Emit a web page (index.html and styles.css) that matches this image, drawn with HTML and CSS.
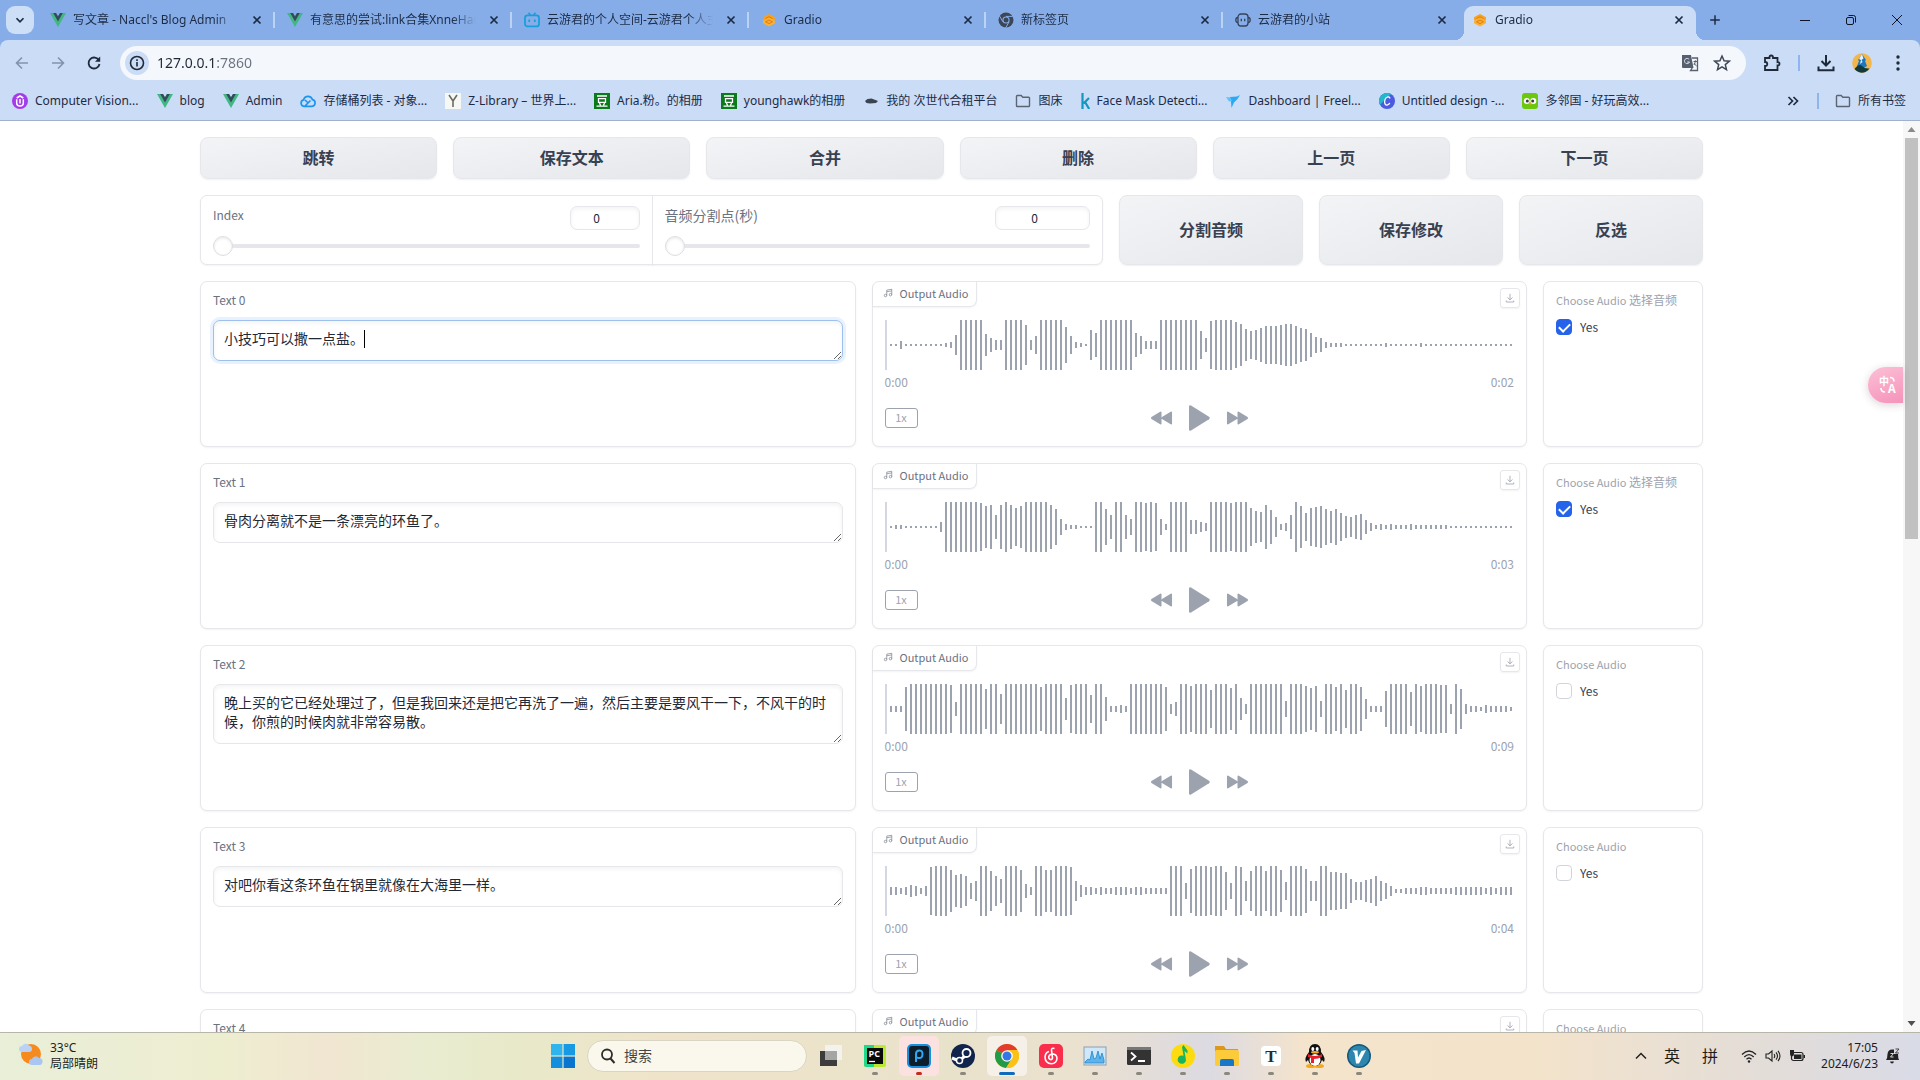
FILE: index.html
```html
<!DOCTYPE html>
<html lang="zh-CN">
<head>
<meta charset="utf-8">
<title>Gradio</title>
<link rel="stylesheet" href="styles.css">
</head>
<body>
<svg class="defs" aria-hidden="true">
  <symbol id="i-close" viewBox="0 0 16 16"><path d="M4.500 4.500l7 7M11.500 4.500l-7 7" fill="none" stroke="currentColor" stroke-width="1.700"/></symbol>
  <symbol id="i-vue" viewBox="0 0 16 16"><path d="M0 1h6l2 3 2-3h6L8 15z" fill="#41b883"/><path d="M3.200 1H6l2 3.400L10 1h2.800L8 9.500z" fill="#35495e"/></symbol>
  <symbol id="i-gradio" viewBox="0 0 16 16"><path d="M8 2l6 3.200v2.600L8 11 2 7.800V5.200z" fill="#f9a11b"/><path d="M8 5.600l6 3.200v2.400L8 14.400l-6-3.200V8.800z" fill="#fbb034"/><path d="M4.500 6.500L8 4.700l3.500 1.800M4.500 9.800L8 11.600l3.500-1.800L8 8z" fill="none" stroke="#e07f12"/></symbol>
  <symbol id="i-folder" viewBox="0 0 16 16"><path d="M1.500 3.300q0-.8.800-.8h3.900l1.600 1.700h5.900q.8 0 .8.800v7.700q0 .8-.8.800H2.300q-.8 0-.8-.8z" fill="none" stroke="#5b6472" stroke-width="1.400"/></symbol>
  <symbol id="i-dou" viewBox="0 0 16 16"><rect width="16" height="16" fill="#0b7a1a"/><path d="M3 3h10M4.500 5.700h7v3.600h-7zM5.500 10l1 2.500M10.500 10l-1 2.500M2.500 13.200h11" fill="none" stroke="#fff" stroke-width="1.300"/></symbol>
  <symbol id="i-music" viewBox="0 0 24 24"><path d="M9 18V5l12-2v13M9 9l12-2" fill="none" stroke="currentColor" stroke-width="1.500"/><circle cx="6" cy="18" r="3" fill="none" stroke="currentColor" stroke-width="1.500"/><circle cx="18" cy="16" r="3" fill="none" stroke="currentColor" stroke-width="1.500"/></symbol>
  <symbol id="i-save" viewBox="0 0 12 12"><path d="M6 1v7M3 5.300L6 8.200l3-2.900M1.500 9v1.800h9V9" fill="none" stroke="currentColor"/></symbol>
  <symbol id="i-rew" viewBox="0 0 24 16"><path d="M12 2v12q-.3 1.200-1.400.5L1.500 9q-1.200-1 0-2l9.100-5.500Q11.700.8 12 2zM23 2v12q-.3 1.200-1.400.5L12.500 9q-1.200-1 0-2l9.100-5.500q1.100-.7 1.400.5z" fill="currentColor"/></symbol>
  <symbol id="i-play" viewBox="0 0 21 26"><path d="M0 1.500Q.2-.4 2 .6l18 11.200q1.500 1.200 0 2.400L2 25.400q-1.800 1-2-.9z" fill="currentColor"/></symbol>
  <symbol id="i-ffw" viewBox="0 0 24 16"><path d="M1 2v12q.3 1.200 1.400.5L11.500 9q1.200-1 0-2L2.400 1.500Q1.300.8 1 2zM12 2v12q.3 1.200 1.400.5L22.500 9q1.200-1 0-2l-9.100-5.500Q12.300.8 12 2z" fill="currentColor"/></symbol>
</svg>

<header class="browser">
  <div class="tabstrip">
    <button class="tab-search" aria-label="搜索标签页"><svg viewBox="0 0 16 16" width="14" height="14"><path d="M4 6l4 4 4-4" fill="none" stroke="#1c2b45" stroke-width="2"/></svg></button>
    <div class="tabs">
      <div class="tab"><svg class="fav"><use href="#i-vue"/></svg><span class="tab-title">写文章 - Naccl's Blog Admin</span><button class="tab-close" aria-label="关闭"><svg><use href="#i-close"/></svg></button></div>
      <div class="tab"><svg class="fav"><use href="#i-vue"/></svg><span class="tab-title">有意思的尝试:link合集XnneHang的博客</span><button class="tab-close" aria-label="关闭"><svg><use href="#i-close"/></svg></button></div>
      <div class="tab"><svg class="fav" viewBox="0 0 16 16"><path d="M4.500.8L6.500 3M11.500.8L9.500 3" stroke="#169fdb" stroke-width="1.600"/><rect x="1" y="3.400" width="14" height="11" rx="2.500" fill="none" stroke="#169fdb" stroke-width="1.800"/><path d="M5.200 7.500v2.500M10.800 7.500v2.500" stroke="#169fdb" stroke-width="1.700"/></svg><span class="tab-title">云游君的个人空间-云游君个人主页-哔哩哔哩</span><button class="tab-close" aria-label="关闭"><svg><use href="#i-close"/></svg></button></div>
      <div class="tab"><svg class="fav"><use href="#i-gradio"/></svg><span class="tab-title">Gradio</span><button class="tab-close" aria-label="关闭"><svg><use href="#i-close"/></svg></button></div>
      <div class="tab"><svg class="fav" viewBox="0 0 16 16"><circle cx="8" cy="8" r="7.500" fill="#3c4656"/><circle cx="8" cy="8" r="3.600" fill="#87ade8"/><circle cx="8" cy="8" r="2.500" fill="#3c4656"/><path d="M8 4.400h6.800M4.900 9.800L1.500 4M11.100 9.800l-3.400 6" stroke="#87ade8"/></svg><span class="tab-title">新标签页</span><button class="tab-close" aria-label="关闭"><svg><use href="#i-close"/></svg></button></div>
      <div class="tab"><svg class="fav" viewBox="0 0 16 16"><rect x="3" y="2" width="10" height="12" rx="3" fill="none" stroke="#34435c" stroke-width="1.300"/><path d="M3 5.500Q.8 5.500.8 8T3 10.500M13 5.500q2.200 0 2.200 2.500T13 10.500M6.300 6.800v2.400M9.700 6.800v2.400" fill="none" stroke="#34435c" stroke-width="1.300"/></svg><span class="tab-title">云游君的小站</span><button class="tab-close" aria-label="关闭"><svg><use href="#i-close"/></svg></button></div>
      <div class="tab active"><svg class="fav"><use href="#i-gradio"/></svg><span class="tab-title">Gradio</span><button class="tab-close" aria-label="关闭"><svg><use href="#i-close"/></svg></button></div>
    </div>
    <button class="new-tab" aria-label="新标签页"><svg viewBox="0 0 16 16"><path d="M8 2.500v11M2.500 8h11" stroke="currentColor" stroke-width="1.700"/></svg></button>
    <div class="window-controls">
      <button aria-label="最小化"><svg viewBox="0 0 12 12"><path d="M1 6.500h10" stroke="currentColor"/></svg></button>
      <button aria-label="还原"><svg viewBox="0 0 12 12"><rect x="1.500" y="3.500" width="7" height="7" rx="1.500" fill="none" stroke="currentColor"/><path d="M3.500 1.500h5q2 0 2 2v5" fill="none" stroke="currentColor"/></svg></button>
      <button aria-label="关闭窗口"><svg viewBox="0 0 12 12"><path d="M1 1l10 10M11 1L1 11" stroke="currentColor"/></svg></button>
    </div>
  </div>

  <div class="toolbar">
    <button class="tool dim" aria-label="后退"><svg viewBox="0 0 16 16"><path d="M14 8H3M8 2.500L2.500 8 8 13.500" fill="none" stroke="currentColor" stroke-width="1.600"/></svg></button>
    <button class="tool dim" aria-label="前进"><svg viewBox="0 0 16 16"><path d="M2 8h11M8 2.500L13.500 8 8 13.500" fill="none" stroke="currentColor" stroke-width="1.600"/></svg></button>
    <button class="tool" aria-label="重新加载"><svg viewBox="0 0 16 16"><path d="M13 5.500A5.500 5.500 0 1 0 13.500 9" fill="none" stroke="currentColor" stroke-width="1.800"/><path d="M14.200 1.500v5.200H9z" fill="currentColor"/></svg></button>
    <div class="omnibox">
      <button class="site-info" aria-label="查看网站信息"><svg viewBox="0 0 16 16"><circle cx="8" cy="8" r="6.500" fill="none" stroke="currentColor" stroke-width="1.600"/><path d="M8 7v4.500M8 4.300v1.600" stroke="currentColor" stroke-width="1.600"/></svg></button>
      <input class="url" type="text" aria-label="地址栏" value="127.0.0.1:7860">
      <button class="omni-tool" aria-label="翻译此页"><svg viewBox="0 0 18 18"><path d="M1 1h9l2.500 13H2q-1 0-1-1z" fill="#56606e"/><path d="M11 4h5.500v12.500H9.500l2-3" fill="none" stroke="#56606e" stroke-width="1.300"/><path d="M8.200 5.500A2.600 2.600 0 1 0 8.500 8H6.200" fill="none" stroke="#dfe6ef"/><path d="M12.500 7.500h3.500M14.300 6.300v1.200q-.4 2.500-1.500 3.500M13 9q1 2 2.700 3" fill="none" stroke="#56606e"/></svg></button>
      <button class="omni-tool" aria-label="为此标签页添加书签"><svg viewBox="0 0 18 18"><path d="M9 2l2.100 4.700 5.100.5-3.900 3.400 1.200 5L9 12.900l-4.500 2.700 1.200-5L1.800 7.200l5.100-.5z" fill="none" stroke="#3e4856" stroke-width="1.500"/></svg></button>
    </div>
    <div class="toolbar-right">
      <button class="tool" aria-label="扩展程序"><svg viewBox="0 0 18 18"><path d="M2 4h4.500q-.3-2.500 1.700-2.500T10 4h4.500v4.200q2-.2 2 1.600t-2 1.700V16H2v-4q2.300.2 2.300-1.900T2 8z" fill="none" stroke="currentColor" stroke-width="1.800"/></svg></button>
      <i class="divider"></i>
      <button class="tool" aria-label="下载"><svg viewBox="0 0 18 18"><path d="M9 1v10M4.500 7L9 11.500 13.500 7M1.500 12.500v3.700h15v-3.700" fill="none" stroke="currentColor" stroke-width="2"/></svg></button>
      <button class="tool" aria-label="个人资料"><svg class="avatar" viewBox="0 0 20 20"><circle cx="10" cy="10" r="9.800" fill="#f2b64c"/><path d="M10 1l4 6-1 1 2 5-5 3-5-3 2-5-1-1z" fill="#1d78c1"/><path d="M10 1l1.500 4.500-2 1.500 1 2-2.500 2 1-4-2-1z" fill="#e8f4fa"/><path d="M2.500 16Q7 10 10 13t7.500 2.500Q14 19.800 10 19.800T2.500 16z" fill="#123a3c"/></svg></button>
      <button class="tool" aria-label="菜单"><svg viewBox="0 0 18 18"><circle cx="9" cy="3" r="1.700" fill="currentColor"/><circle cx="9" cy="9" r="1.700" fill="currentColor"/><circle cx="9" cy="15" r="1.700" fill="currentColor"/></svg></button>
    </div>
  </div>

  <nav class="bookmarks" aria-label="书签栏">
    <a href="#"><svg viewBox="0 0 16 16"><circle cx="8" cy="8" r="8" fill="#a43bea"/><path d="M4.700 6.300v4q0 2.700 3.300 2.700t3.300-2.700v-4M8 6v4.500M4.700 5L8 3l3.300 2" fill="none" stroke="#fff" stroke-width="1.500"/></svg>Computer Vision...</a>
    <a href="#"><svg><use href="#i-vue"/></svg>blog</a>
    <a href="#"><svg><use href="#i-vue"/></svg>Admin</a>
    <a href="#"><svg viewBox="0 0 16 16"><path d="M4 13.300a3.300 3.300 0 0 1-.3-6.500 4.500 4.500 0 0 1 8.700-.2 3.400 3.400 0 0 1-.4 6.700zM5 13l5.500-5.500M8.200 10L5 7" fill="none" stroke="#1b96f0" stroke-width="1.700"/></svg>存储桶列表 - 对象...</a>
    <a href="#"><svg viewBox="0 0 16 16"><rect width="16" height="16" fill="#f7f7f4"/><path d="M4 2l4 6 4-6M8 8v6" fill="none" stroke="#6c6c66" stroke-width="1.600"/></svg>Z-Library – 世界上...</a>
    <a href="#"><svg><use href="#i-dou"/></svg>Aria.粉。的相册</a>
    <a href="#"><svg><use href="#i-dou"/></svg>younghawk的相册</a>
    <a href="#"><svg viewBox="0 0 16 16"><path d="M2 8l2.500-2 4-.5 4 1.500L15 8l-2 2-6 .5L3.500 10z" fill="#3b4451"/></svg>我的 次世代合租平台</a>
    <a href="#"><svg><use href="#i-folder"/></svg>图床</a>
    <a href="#"><svg class="narrow" viewBox="0 0 9 16"><path d="M1.500 0v16M8 5l-5.500 5.500M4 9l4.200 7" fill="none" stroke="#1397c0" stroke-width="2.200"/></svg>Face Mask Detecti...</a>
    <a href="#"><svg viewBox="0 0 16 16"><path d="M5 4l7-.5L15 2l-2.500 4L9 9.500 6.500 15l-.5-6z" fill="#29aaf4"/><path d="M1 4l4 .5L7 8 4 8.500z" fill="#5cc2fa"/></svg>Dashboard | Freel...</a>
    <a href="#"><svg viewBox="0 0 16 16"><circle cx="8" cy="8" r="8" fill="#4a5be0"/><path d="M1.200 4A8 8 0 0 1 12 1Q6 6 1 12A8 8 0 0 1 1.200 4z" fill="#1fb9ca"/><path d="M11 5.500Q10.500 3.500 8.600 4 5.800 5 5.600 9q.3 3.500 2.700 3 1.700-.5 2.500-2" fill="none" stroke="#fff" stroke-width="1.300"/></svg>Untitled design -...</a>
    <a href="#"><svg viewBox="0 0 16 16"><rect width="16" height="16" rx="3" fill="#6cc80f"/><circle cx="4.700" cy="8" r="3" fill="#fff"/><circle cx="11.300" cy="8" r="3" fill="#fff"/><circle cx="5.300" cy="8" r="1.500" fill="#3d3d46"/><circle cx="10.700" cy="8" r="1.500" fill="#3d3d46"/><path d="M8 9l1.300 1.500L8 12l-1.300-1.500z" fill="#f9a01b"/></svg>多邻国 - 好玩高效...</a>
    <div class="bookmarks-end">
      <button aria-label="更多书签"><svg viewBox="0 0 16 16"><path d="M3.500 4l4 4-4 4M8.500 4l4 4-4 4" fill="none" stroke="#1f2b3d" stroke-width="1.700"/></svg></button>
      <i class="divider"></i>
      <a href="#"><svg><use href="#i-folder"/></svg>所有书签</a>
    </div>
  </nav>
</header>

<div class="viewport">
  <main class="page">
    <div class="container">
      <div class="actions">
        <button class="btn">跳转</button>
        <button class="btn">保存文本</button>
        <button class="btn">合并</button>
        <button class="btn">删除</button>
        <button class="btn">上一页</button>
        <button class="btn">下一页</button>
      </div>

      <div class="controls">
        <div class="card sliders">
          <div class="slider-box">
            <div class="slider-head"><label for="index">Index</label><input class="num" type="text" aria-label="Index" value="0"></div>
            <input id="index" class="range" type="range" min="0" max="100" value="0">
          </div>
          <div class="slider-box">
            <div class="slider-head"><label class="cjk-label" for="split">音频分割点(秒)</label><input class="num wide" type="text" aria-label="音频分割点(秒)" value="0"></div>
            <input id="split" class="range" type="range" min="0" max="100" value="0">
          </div>
        </div>
        <button class="btn">分割音频</button>
        <button class="btn">保存修改</button>
        <button class="btn">反选</button>
      </div>

      <section class="item">
        <div class="card text-card"><label for="t0">Text 0</label>
          <div class="field"><textarea id="t0" class="focused" rows="1">小技巧可以撒一点盐。</textarea><i class="caret"></i></div></div>
        <div class="card audio">
          <div class="audio-head"><span class="audio-label"><svg><use href="#i-music"/></svg>Output Audio</span><button class="save" aria-label="下载"><svg><use href="#i-save"/></svg></button></div>
          <svg class="wave" data-levels="2*2 8 2*8 4 6 20 50*5 22 14 10 10 50*4 40 10 18 50*5 36 18 6 4 2 30 24 50*7 24 18 8*3 50*8 28 14 48 50*4 46 42 32 28 30 34 38*3 40 42 42 38 34 32 24 16 14 6 4*3 2*8 4 2*6 4 2*18"></svg>
          <div class="times"><span>0:00</span><span>0:02</span></div>
          <div class="player"><button class="speed">1x</button><div class="transport"><button aria-label="后退"><svg class="skip"><use href="#i-rew"/></svg></button><button aria-label="播放"><svg class="play"><use href="#i-play"/></svg></button><button aria-label="快进"><svg class="skip"><use href="#i-ffw"/></svg></button></div></div>
        </div>
        <div class="card choose"><span class="choose-title">Choose Audio <span class="cjk">选择音频</span></span><label class="check"><input type="checkbox" checked>Yes</label></div>
      </section>

      <section class="item">
        <div class="card text-card"><label for="t1">Text 1</label>
          <div class="field"><textarea id="t1" rows="1">骨肉分离就不是一条漂亮的环鱼了。</textarea></div></div>
        <div class="card audio">
          <div class="audio-head"><span class="audio-label"><svg><use href="#i-music"/></svg>Output Audio</span><button class="save" aria-label="下载"><svg><use href="#i-save"/></svg></button></div>
          <svg class="wave" data-levels="2 4 4 2*7 10 50*7 48 42 44 24 44 50 44 38 42 50*5 44 36 16 6 4 4 2*3 50*2 36 24 50*2 24 16 50*2 48 50 48 16 6 50*4 14 14 10 8 50*4 48 50*3 38 32 30 44 34 20 6 8 24 50 42 28 38 40 42 36 32 36 28 22 20 24 26 14 8 4 6 4 6 4*3 6 4*7 2*13"></svg>
          <div class="times"><span>0:00</span><span>0:03</span></div>
          <div class="player"><button class="speed">1x</button><div class="transport"><button aria-label="后退"><svg class="skip"><use href="#i-rew"/></svg></button><button aria-label="播放"><svg class="play"><use href="#i-play"/></svg></button><button aria-label="快进"><svg class="skip"><use href="#i-ffw"/></svg></button></div></div>
        </div>
        <div class="card choose"><span class="choose-title">Choose Audio <span class="cjk">选择音频</span></span><label class="check"><input type="checkbox" checked>Yes</label></div>
      </section>

      <section class="item">
        <div class="card text-card"><label for="t2">Text 2</label>
          <div class="field"><textarea id="t2" rows="2">晚上买的它已经处理过了，但是我回来还是把它再洗了一遍，然后主要是要风干一下，不风干的时候，你煎的时候肉就非常容易散。</textarea></div></div>
        <div class="card audio">
          <div class="audio-head"><span class="audio-label"><svg><use href="#i-music"/></svg>Output Audio</span><button class="save" aria-label="下载"><svg><use href="#i-save"/></svg></button></div>
          <svg class="wave" data-levels="6*3 44 50*8 48 14 50*5 40 50*2 30 50*7 44 50*4 22 48 50*3 28 50*2 24 6 6 8 6 50*7 44 10 14 50*2 46 50*3 38 50*3 42 50 22 10 50*7 16 50*3 46 42 46 16 50*2 44 50 38 50*2 44 20 6*3 36 50*4 34 50 46 50*3 48 48 10 50 40 10 6 6 4 8 6*4 4"></svg>
          <div class="times"><span>0:00</span><span>0:09</span></div>
          <div class="player"><button class="speed">1x</button><div class="transport"><button aria-label="后退"><svg class="skip"><use href="#i-rew"/></svg></button><button aria-label="播放"><svg class="play"><use href="#i-play"/></svg></button><button aria-label="快进"><svg class="skip"><use href="#i-ffw"/></svg></button></div></div>
        </div>
        <div class="card choose"><span class="choose-title">Choose Audio</span><label class="check"><input type="checkbox">Yes</label></div>
      </section>

      <section class="item">
        <div class="card text-card"><label for="t3">Text 3</label>
          <div class="field"><textarea id="t3" rows="1">对吧你看这条环鱼在锅里就像在大海里一样。</textarea></div></div>
        <div class="card audio">
          <div class="audio-head"><span class="audio-label"><svg><use href="#i-music"/></svg>Output Audio</span><button class="save" aria-label="下载"><svg><use href="#i-save"/></svg></button></div>
          <svg class="wave" data-levels="8 8 6 8 12 10 6 10 48 50*3 42 32 34 30 16 20 50*2 40 30 24 50*3 42 14 8 50*2 42 42 50*3 48 20 12 8 8 6 8 6 6 8*3 6 8 8 6*5 50*3 16 44 50*3 48 50*2 38 16 50 48 20 40 50*2 40 50*2 42 18 50*3 44 20 20 50*2 38 38 36 36 24 18 18 22 24 30 20 16 10 4 4 6*3 8 8 6*5 8*6 6 8 6 8*3"></svg>
          <div class="times"><span>0:00</span><span>0:04</span></div>
          <div class="player"><button class="speed">1x</button><div class="transport"><button aria-label="后退"><svg class="skip"><use href="#i-rew"/></svg></button><button aria-label="播放"><svg class="play"><use href="#i-play"/></svg></button><button aria-label="快进"><svg class="skip"><use href="#i-ffw"/></svg></button></div></div>
        </div>
        <div class="card choose"><span class="choose-title">Choose Audio</span><label class="check"><input type="checkbox">Yes</label></div>
      </section>

      <section class="item">
        <div class="card text-card"><span class="label">Text 4</span></div>
        <div class="card audio">
          <div class="audio-head"><span class="audio-label"><svg><use href="#i-music"/></svg>Output Audio</span><button class="save" aria-label="下载"><svg><use href="#i-save"/></svg></button></div>
        </div>
        <div class="card choose"><span class="choose-title">Choose Audio</span></div>
      </section>
    </div>
  </main>
  <div class="scrollbar" aria-hidden="true">
    <svg viewBox="0 0 17 17"><path d="M4.500 11L8.500 6l4 5z" fill="#8b8b8b"/></svg>
    <i class="thumb"></i>
    <svg class="down" viewBox="0 0 17 17"><path d="M4.500 6l4 5 4-5z" fill="#505050"/></svg>
  </div>
  <button class="translate" aria-label="翻译"><span class="zh">中</span><span class="en">A</span><svg viewBox="0 0 20 20"><path d="M12 2.500q4 0 4 4M3 13q0 4 4 4" fill="none" stroke="#fff" stroke-width="1.600"/></svg></button>
</div>

<footer class="taskbar">
  <div class="weather">
    <svg viewBox="0 0 24 24"><circle cx="12" cy="12" r="10" fill="#f58b1f"/><path d="M3 10a3 3 0 0 1 0-6 4 4 0 0 1 7-.5Q13 4 13 7t-3 3z" fill="#b9d2f6"/><path d="M13 23a3 3 0 0 1 0-6 4 4 0 0 1 7-1q4 .5 3.500 4T20 23z" fill="#a9c5f2"/></svg>
    <div><div>33°C</div><div>局部晴朗</div></div>
  </div>
  <div class="apps">
    <button class="app" aria-label="开始"><svg viewBox="0 0 24 24"><path d="M0 0h11.400v11.400H0z" fill="#2fb4ee"/><path d="M12.600 0H24v11.400H12.600z" fill="#1899e4"/><path d="M0 12.600h11.400V24H0z" fill="#138fde"/><path d="M12.600 12.600H24V24H12.600z" fill="#0a75cf"/></svg></button>
    <label class="search"><svg viewBox="0 0 16 16"><circle cx="7" cy="6.500" r="5" fill="none" stroke="#2c2c2a" stroke-width="1.800"/><path d="M10.500 10.500l4 4.500" stroke="#2c2c2a" stroke-width="2"/></svg><input type="text" placeholder="搜索" aria-label="搜索"></label>
    <button class="app" aria-label="任务视图"><svg viewBox="0 0 24 24"><rect x="1" y="7" width="17" height="15" fill="#3c3c3c"/><rect x="6" y="1" width="17" height="15" fill="#f4f4f4" opacity=".85"/><rect x="6" y="7" width="12" height="9" fill="#a5a5a3"/></svg></button>
    <button class="app running" aria-label="PyCharm"><svg viewBox="0 0 24 24"><rect x="1" y="1" width="22" height="22" rx="2" fill="#b9ea2f"/><path d="M1 1h10v22H3q-2 0-2-2z" fill="#21d789"/><rect x="4" y="4" width="16" height="16" fill="#0a0a0a"/><path d="M6 17.500h6" stroke="#fff" stroke-width="1.300"/><text x="5.500" y="13" font-size="9" font-weight="700" fill="#fff">PC</text></svg></button>
    <button class="app running alert" aria-label="P"><svg viewBox="0 0 24 24"><rect width="24" height="24" rx="5" fill="#1690dd"/><rect x="2" y="2" width="20" height="20" rx="3" fill="#0c1d2c"/><path d="M9 18v-8q0-3.500 3.300-3.500t3.200 3.800-3.300 3.700q-1.500 0-3-1" fill="none" stroke="#2ba9f5" stroke-width="2"/></svg></button>
    <button class="app running" aria-label="Steam"><svg viewBox="0 0 24 24"><circle cx="12" cy="12" r="12" fill="#10244c"/><path d="M1 14l7 3 6-5" stroke="#fff" stroke-width="3" fill="none"/><circle cx="15.500" cy="9" r="4" fill="#10244c" stroke="#fff" stroke-width="1.800"/><circle cx="8.500" cy="16.500" r="3" fill="#10244c" stroke="#fff" stroke-width="1.500"/></svg></button>
    <button class="app current" aria-label="Chrome"><svg viewBox="0 0 24 24"><circle cx="12" cy="12" r="12" fill="#fbc116"/><path d="M12 12L1.600 6A12 12 0 0 1 22.400 6z" fill="#e33b2e"/><path d="M12 12L1.600 6A12 12 0 0 0 11 24l6-9z" fill="#229a46"/><path d="M12 6h10.400A12 12 0 0 1 11 24l5.500-9z" fill="#fbc116"/><circle cx="12" cy="12" r="5.800" fill="#fff"/><circle cx="12" cy="12" r="4.500" fill="#3577e5"/></svg></button>
    <button class="app running" aria-label="网易云音乐"><svg viewBox="0 0 24 24"><rect width="24" height="24" rx="5" fill="#fb2d4c"/><path d="M15.500 4.500q-3-1-3 1.500l1 8q-.5 2-2.200 1.500-2-.7-1.500-3 .8-2.500 4.200-2.500 4 .5 4 4.500-.5 5-5.500 5.300-6.500-.3-6.500-7Q6.500 8.500 10 7.500" fill="none" stroke="#fff" stroke-width="1.600"/></svg></button>
    <button class="app running" aria-label="性能监视器"><svg viewBox="0 0 24 24"><rect x="1" y="3" width="22" height="18" fill="#cfe8f9" stroke="#8b9fb0"/><path d="M2 18l3-3 2 1 2-9 2 8 2-1 2-7 2 8 2-6 2 7v3H2z" fill="#5db4ec" stroke="#2387c8" stroke-width=".8"/></svg></button>
    <button class="app running" aria-label="终端"><svg viewBox="0 0 24 24"><rect y="3" width="24" height="18" rx="1.500" fill="#333"/><path d="M0 3h24v3H0z" fill="#777"/><path d="M4 8.500l4.500 4L4 16.500M11 17h7" fill="none" stroke="#fff" stroke-width="1.800"/></svg></button>
    <button class="app running" aria-label="QQ音乐"><svg viewBox="0 0 24 24"><circle cx="12" cy="12" r="12" fill="#fcdc10"/><path d="M11 3l1.500-2 4 5.500v3L13.500 7 15 16a4.200 4.200 0 1 1-2.500-4.200z" fill="#1bb45d"/></svg></button>
    <button class="app running" aria-label="文件资源管理器"><svg viewBox="0 0 24 24"><path d="M0 2h9l2 3h12v5H0z" fill="#dd981b"/><rect y="6" width="24" height="16" rx="1.500" fill="#fccb3c"/><path d="M5 22v-5q0-2 2-2h10q2 0 2 2v5z" fill="#1878c8"/></svg></button>
    <button class="app running" aria-label="Typora"><svg viewBox="0 0 24 24"><rect x="2" y="2" width="20" height="20" rx="4" fill="#fff"/><text class="serif" x="12" y="18" font-size="17" font-weight="700" text-anchor="middle" fill="#2b2b2b">T</text></svg></button>
    <button class="app running" aria-label="QQ"><svg viewBox="0 0 24 24"><ellipse cx="8" cy="22" rx="5" ry="2" fill="#f5a81c"/><ellipse cx="16" cy="22" rx="5" ry="2" fill="#f5a81c"/><path d="M12 0q6 0 6 8 5 6 3 10l-2-2q-2 6-7 6t-7-6l-2 2q-2-4 3-10 0-8 6-8z" fill="#111"/><ellipse cx="12" cy="16" rx="5.500" ry="6" fill="#fff"/><ellipse cx="9.800" cy="5" rx="1.500" ry="2" fill="#fff"/><ellipse cx="14.200" cy="5" rx="1.500" ry="2" fill="#fff"/><ellipse cx="12" cy="8.300" rx="4" ry="1.300" fill="#f5a81c"/><path d="M5 10q7 4 14 0v3q-4 2-8 2v4H8v-5l-3-1z" fill="#e7202c"/></svg></button>
    <button class="app running" aria-label="V"><svg viewBox="0 0 24 24"><circle cx="12" cy="12" r="12" fill="#17577c"/><circle cx="12" cy="12" r="10.500" fill="#2d86ae"/><path d="M5.500 6.500h5l.5 7 3.500-6.500 4.500-1-7 13.500H9L7.500 9z" fill="#fff"/></svg></button>
  </div>
  <div class="tray">
    <button aria-label="显示隐藏的图标"><svg viewBox="0 0 16 16"><path d="M3 10.500l5-5 5 5" fill="none" stroke="#222" stroke-width="1.500"/></svg></button>
    <button class="ime">英</button>
    <button class="ime">拼</button>
    <div class="status">
      <svg viewBox="0 0 16 16"><path d="M1 6.500q7-7 14 0M3.300 9q4.700-4.800 9.400 0M5.500 11.300q2.500-2.600 5 0" fill="none" stroke="#222" stroke-width="1.300"/><circle cx="8" cy="13.500" r="1.200" fill="#222"/></svg>
      <svg viewBox="0 0 16 16"><path d="M1 6h2.500L7 3v10L3.500 10H1zM9 6q1.500 2 0 4M11 4.300q3 3.700 0 7.400M13 2.800q4 5.200 0 10.400" fill="none" stroke="#222" stroke-width="1.100"/></svg>
      <svg viewBox="0 0 16 16"><rect x="2.500" y="4.500" width="11.500" height="8" rx="2" fill="none" stroke="#222" stroke-width="1.200"/><rect x="5" y="6.500" width="7.500" height="4.500" fill="#222"/><path d="M15.300 7v3" stroke="#222" stroke-width="1.400"/><path d="M1 2h4v4q0 2-2 2.500Q1 8 1 6z" fill="#222"/></svg>
    </div>
    <div class="clock"><div>17:05</div><div>2024/6/23</div></div>
    <svg class="bell" viewBox="0 0 16 16"><path d="M2 12q1.500-2 1.500-6Q4 1.500 8 1.500h2V6h4q0 4 1 6z" fill="#222"/><path d="M6 13.500h4q-.5 2-2 2t-2-2z" fill="#222"/><path d="M11.500 1h3.500l-3.500 4H15" fill="none" stroke="#333" stroke-width=".9"/><path d="M6.500 5.500h3l-3 3.500h3" fill="none" stroke="#eee" stroke-width=".9"/></svg>
  </div>
</footer>
<script src="waves.js"></script>
</body>
</html>
```
FILE: styles.css
```css
* { box-sizing: border-box; }
html, body { margin: 0; height: 100%; }
body {
  display: flex;
  flex-direction: column;
  overflow: hidden;
  background: #fff;
  font: 12px/16px "Noto Sans", "Noto Sans CJK SC", sans-serif;
  color: #1f2937;
}
button { margin: 0; padding: 0; border: 0; background: none; font: inherit; color: inherit; display: flex; align-items: center; justify-content: center; }
input, textarea { margin: 0; font: inherit; color: inherit; }
a { color: inherit; text-decoration: none; }
svg { flex: none; display: block; }
i { flex: none; display: block; }
.defs { position: absolute; width: 0; height: 0; }

/* browser frame */
.browser { flex: none; background: #87ade8; color: #1c2b45; border-bottom: 1px solid #a3b0cb; }
.tabstrip { display: flex; height: 40px; padding: 6px 0 0 6px; }
.tab-search { width: 28px; height: 28px; border-radius: 9px; background: #cddff7; }
.tabs { display: flex; min-width: 0; gap: 5px; margin-left: 8px; }
.tab { position: relative; display: flex; align-items: center; flex: 0 1 232px; min-width: 0; width: 232px; height: 34px; padding: 0 9px 6px 8px; gap: 7px; }
.tab::after { content: ""; position: absolute; right: -1px; top: 6px; width: 2px; height: 16px; background: #bcd2f3; }
.tab:nth-child(6)::after { display: none; }
.tab.active { background: #cbdcf6; border-radius: 9px 9px 0 0; }
.tab.active::before, .tab.active::after { content: ""; position: absolute; top: auto; bottom: 0; width: 9px; height: 9px; background: radial-gradient(circle at 0 0, transparent 9px, #cbdcf6 9px); }
.tab.active::before { left: -9px; }
.tab.active::after { right: -9px; background: radial-gradient(circle at 100% 0, transparent 9px, #cbdcf6 9px); }
.fav { width: 16px; height: 16px; }
.tab-title { flex: 1; min-width: 0; margin-right: 3px; overflow: hidden; white-space: nowrap; mask-image: linear-gradient(90deg, #000 calc(100% - 24px), transparent); }
.tab-close, .tab-close svg { width: 16px; height: 16px; }
.new-tab { width: 28px; height: 28px; margin-left: 5px; }
.new-tab svg { width: 14px; height: 14px; }
.window-controls { display: flex; margin-left: auto; height: 28px; color: #0d1526; }
.window-controls button { width: 46px; }
.window-controls svg { width: 12px; height: 12px; }

.toolbar { display: flex; align-items: center; height: 46px; padding: 0 4px; background: #cbdcf6; border-radius: 8px 8px 0 0; color: #1f2937; }
.tool { width: 36px; height: 34px; }
.tool svg { width: 16px; height: 16px; }
.tool.dim { color: #8392ad; }
.omnibox { flex: 1; display: flex; align-items: center; height: 34px; margin-left: 8px; padding: 0 8px 0 5px; border-radius: 17px; background: #f4f8fd; }
.site-info { width: 24px; height: 24px; border-radius: 12px; background: #cbdcf6; }
.site-info svg { width: 16px; height: 16px; }
.url { flex: 1; min-width: 0; border: 0; outline: 0; padding: 0 8px; font-size: 14px; line-height: 20px; color: transparent; background: linear-gradient(90deg, #1f2937 67px, #6a7280 67px) text; }
.omni-tool { width: 32px; height: 32px; }
.omni-tool svg { width: 18px; height: 18px; }
.toolbar-right { display: flex; align-items: center; margin-left: 8px; }
.toolbar-right .tool svg { width: 18px; height: 18px; }
.toolbar-right .tool .avatar { width: 20px; height: 20px; }
.divider { width: 2px; height: 16px; margin: 0 8px; background: #8fb4ee; }

.bookmarks { display: flex; align-items: center; height: 34px; padding: 0 14px 4px 12px; gap: 18px; background: #cbdcf6; white-space: nowrap; }
.bookmarks a { display: flex; align-items: center; gap: 7px; }
.bookmarks svg { width: 16px; height: 16px; }
.bookmarks svg.narrow { width: 9px; }
.bookmarks-end { display: flex; align-items: center; margin-left: auto; }
.bookmarks-end .divider { margin: 0 16px; }

/* page */
.viewport { position: relative; flex: 1; min-height: 0; display: flex; overflow: hidden; font-family: "Noto Sans CJK SC", sans-serif; }
.page { flex: 1; min-width: 0; padding: 16px; }
.container { max-width: 1503px; margin: 0 auto; display: flex; flex-direction: column; gap: 16px; }
.actions { display: grid; grid-template-columns: repeat(6, minmax(0, 1fr)); gap: 16px; }
.btn { min-height: 42px; padding-bottom: 2px; border: 1px solid #e5e7eb; border-radius: 8px; background: linear-gradient(to bottom right, #f3f4f6, #e5e7eb); box-shadow: 0 1px 2px rgba(0, 0, 0, .06); font-size: 16px; line-height: 24px; font-weight: 600; color: #374151; }
.controls { display: grid; grid-template-columns: minmax(0, 1fr) repeat(3, 184px); gap: 16px; }
.card { border: 1px solid #e5e7eb; border-radius: 7px; background: #fff; box-shadow: 0 1px 2px rgba(0, 0, 0, .05); }
.sliders { display: grid; grid-template-columns: 1fr 1fr; height: 70px; }
.slider-box { display: flex; flex-direction: column; padding: 10px 12px; gap: 6px; }
.slider-box + .slider-box { border-left: 1px solid #e5e7eb; }
.slider-head { display: flex; justify-content: space-between; color: #6b7280; }
.slider-head label { line-height: 18px; }
.cjk-label { font-size: 14px; }
.num { width: 70px; height: 24px; padding: 0 16px 1px 0; border: 1px solid #e5e7eb; border-radius: 7px; background: #fff; box-shadow: inset 0 2px 4px rgba(0, 0, 0, .05); text-align: center; color: #1f2937; }
.num.wide { width: 95px; }
.range { appearance: none; width: 100%; height: 20px; background: none; }
.range::-webkit-slider-runnable-track { height: 4px; border-radius: 2px; background: #e5e7eb; }
.range::-webkit-slider-thumb { appearance: none; width: 20px; height: 20px; margin-top: -8px; border: 1px solid #dcdee2; border-radius: 10px; background: #fff; box-shadow: inset 0 1px 3px rgba(0, 0, 0, .1); }

.item { display: grid; grid-template-columns: minmax(0, 1fr) minmax(0, 1fr) 160px; gap: 16px; min-height: 166px; }
.text-card { padding: 10px 12px; color: #6b7280; display: flex; flex-direction: column; gap: 12px; }
.text-card label, .text-card .label { line-height: 16px; }
.field { position: relative; display: flex; }
textarea { flex: 1; padding: 8px 10px 12px; border: 1px solid #e5e7eb; border-radius: 7px; outline: 0; background: #fff; box-shadow: inset 0 2px 4px rgba(0, 0, 0, .05); font-size: 14px; line-height: 19px; color: #1f2937; overflow: hidden; resize: vertical; }
textarea.focused { border-color: #9fc0ec; box-shadow: 0 0 0 3px #e8f2fe, inset 0 2px 4px rgba(0, 0, 0, .05); }
.caret { position: absolute; left: 151px; top: 10px; width: 1px; height: 18px; background: #000; }

.audio { display: flex; flex-direction: column; color: #9ca3af; }
.audio-head { display: flex; justify-content: space-between; align-items: flex-start; height: 38px; }
.audio-label { display: flex; align-items: center; gap: 7px; height: 25px; padding: 0 8px 3px 10px; border: solid #e5e7eb; border-width: 0 1px 1px 0; border-radius: 0 0 7px 0; box-shadow: 0 1px 2px rgba(0, 0, 0, .05); font-size: 11px; color: #6b7280; }
.audio-label svg { width: 10px; height: 10px; }
.save { width: 20px; height: 20px; margin: 6px; border: 1px solid #e5e7eb; border-radius: 3px; box-shadow: 0 1px 2px rgba(0, 0, 0, .05); }
.save svg { width: 10px; height: 10px; }
.wave { width: calc(100% - 24px); height: 50px; margin: 0 12px; }
.wave .cursor { fill: #d4d6e2; }
.wave .bar { fill: #9ca3af; }
.times { display: flex; justify-content: space-between; margin-top: 4px; padding: 0 12px; }
.player { display: grid; grid-template-columns: 1fr auto 1fr; align-items: center; margin: 15px 12px; }
.speed { width: 33px; height: 20px; padding-bottom: 2px; border: 1px solid #9ca3af; border-radius: 3px; font-size: 11px; line-height: 16px; }
.transport { display: flex; align-items: center; gap: 16px; height: 26px; }
.skip { width: 23px; height: 16px; }
.play { width: 21px; height: 26px; }

.choose { display: flex; flex-direction: column; padding: 10px 12px; gap: 11px; color: #9ca3af; font-size: 11px; }
.cjk { font-size: 12px; }
.choose-title { line-height: 16px; white-space: nowrap; }
.check { display: flex; align-items: center; gap: 8px; font-size: 12px; color: #374151; }
.check input { appearance: none; display: grid; place-items: center; width: 16px; height: 16px; border: 1px solid #d1d5db; border-radius: 4px; background: #fff; }
.check input:checked { border-color: #2563eb; background: #2563eb; }
.check input:checked::after { content: ""; width: 5px; height: 9px; border: solid #fff; border-width: 0 2px 2px 0; transform: translateY(-1px) rotate(45deg); }

.scrollbar { flex: none; display: flex; flex-direction: column; width: 17px; background: #f7f7f7; }
.scrollbar svg { width: 17px; height: 17px; }
.thumb { height: 44%; margin: 0 2px; background: #c1c1c1; }
.scrollbar .down { margin-top: auto; }
.translate { position: absolute; right: 17px; top: 246px; width: 35px; height: 36px; border-radius: 18px 0 0 18px; background: linear-gradient(160deg, #fcc0d6, #f593ba); box-shadow: 0 2px 8px rgba(80, 30, 60, .2); color: #fff; font-weight: 700; }
.translate svg { width: 20px; height: 20px; margin-left: 4px; }
.translate .zh, .translate .en { position: absolute; font-size: 10px; line-height: 12px; }
.translate .zh { left: 11px; top: 8px; }
.translate .en { left: 20px; top: 15px; font-size: 12px; }

/* taskbar */
.taskbar { flex: none; display: grid; grid-template-columns: 1fr auto 1fr; align-items: center; height: 48px; padding-bottom: 2px; border-top: 1px solid #b8b6a8; color: #1d1d1b; background: linear-gradient(90deg, #e9efd8, #eeedd0 12%, #f1e6d1 17%, #e9ecd0 22%, #e8e9c9 27%, #efe4ca 34%, #e9e2cb 50%, #ebe1cf 56%, #dcdae2 63%, #f5e4cc 68%, #f3e3cb 80%, #e3ddd8 92%, #d9dbe7); }
.weather { display: flex; align-items: center; gap: 7px; padding-left: 19px; }
.weather svg { width: 24px; height: 24px; margin-bottom: 4px; }
.apps { display: flex; align-items: center; gap: 4px; padding-left: 2px; }
.app { position: relative; width: 40px; height: 40px; border-radius: 5px; }
.app svg { width: 24px; height: 24px; font-family: "Open Sans", sans-serif; }
.app .serif { font-family: "Liberation Serif", serif; }
.app.running::after, .app.current::after { content: ""; position: absolute; bottom: 1px; width: 6px; height: 3px; border-radius: 2px; background: #8c877c; }
.app.alert { background: #fbe2e0; }
.app.alert::after { background: #c42b1c; }
.app.current { background: #f6f1e8; }
.app.current::after { width: 16px; background: #0f6cbd; }
.search { display: flex; align-items: center; gap: 8px; width: 220px; height: 32px; padding: 0 12px; border: 1px solid #d9d5c2; border-radius: 16px; background: #faf8ed; }
.search svg { width: 16px; height: 16px; }
.search input { flex: 1; min-width: 0; padding: 0; border: 0; outline: 0; background: none; font-size: 14px; line-height: 20px; }
.search input::placeholder { color: #45443e; opacity: 1; }
.tray { display: flex; align-items: center; justify-content: flex-end; padding-right: 20px; }
.tray button { width: 24px; height: 40px; }
.tray svg { width: 16px; height: 16px; }
.tray .ime { width: 38px; font-size: 16px; }
.status { display: flex; gap: 8px; margin: 0 16px 0 12px; }
.clock { text-align: right; }
.tray .bell { margin-left: 6px; }
```
FILE: waves.js
```js
// Draws each waveform from its run-length list of bar heights ("50*4" = four bars of 50).
const NS = "http://www.w3.org/2000/svg";
const HEIGHT = 50;
const PITCH = 5;

function addBar(svg, name, x, height) {
  const rect = document.createElementNS(NS, "rect");
  rect.setAttribute("class", name);
  rect.setAttribute("x", x);
  rect.setAttribute("y", (HEIGHT - height) / 2);
  rect.setAttribute("width", 2);
  rect.setAttribute("height", height);
  svg.append(rect);
}

document.querySelectorAll(".wave").forEach((svg) => {
  addBar(svg, "cursor", 0, HEIGHT);
  let x = PITCH;
  svg.dataset.levels.split(" ").forEach((token) => {
    const [height, count = 1] = token.split("*").map(Number);
    for (let i = 0; i < count; i++, x += PITCH) addBar(svg, "bar", x, height);
  });
});
```
